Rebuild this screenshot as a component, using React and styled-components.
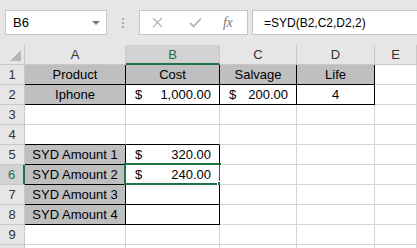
import styled, { createGlobalStyle } from "styled-components";

const GREEN = "#217346";
const GRID = "#d4d4d4";

const Global = createGlobalStyle`
  html, body {
    margin: 0;
    padding: 0;
    background: #ffffff;
  }
  body {
    font-family: "Liberation Sans", Arial, sans-serif;
  }
`;

const Window = styled.div`
  width: 417px;
  height: 248px;
  overflow: hidden;
  background: #ffffff;
`;

const Toolbar = styled.div`
  height: 45px;
  box-sizing: border-box;
  padding: 10px 0 0 5px;
  background: #e6e6e6;
  display: flex;
  align-items: flex-start;
`;

const Box = styled.div`
  height: 25px;
  box-sizing: border-box;
  background: #ffffff;
  border: 1px solid #c6c6c6;
  display: flex;
  align-items: center;
`;

const NameBox = styled(Box)`
  width: 102px;
  padding: 0 6px 0 7px;
  justify-content: space-between;
  font-size: 13px;
  color: #000;
`;

const Caret = styled.span`
  width: 0;
  height: 0;
  border-left: 4px solid transparent;
  border-right: 4px solid transparent;
  border-top: 4px solid #7a7a7a;
`;

const Dots = styled.div`
  width: 32px;
  height: 25px;
  display: flex;
  flex-direction: column;
  align-items: center;
  justify-content: center;
  gap: 2px;

  span {
    width: 2px;
    height: 2px;
    background: #a8a8a8;
  }
`;

const FxGroup = styled(Box)`
  width: 109px;
  padding: 0 0 0 12px;
`;

const IconSlot = styled.span`
  width: ${(p) => p.$w}px;
  display: flex;
  align-items: center;
`;

const Fx = styled.span`
  font-family: "Liberation Serif", "Times New Roman", serif;
  font-style: italic;
  font-size: 14px;
  color: #7a7a7a;
  letter-spacing: -0.5px;
`;

const FormulaBox = styled(Box)`
  flex: 1;
  margin-left: 4px;
  border-right: none;
  padding-left: 11px;
  font-size: 12px;
  color: #000;
`;

const Sheet = styled.div`
  display: grid;
  grid-template-columns: 25px 101px 94px 77px 78px 1fr;
  grid-auto-rows: 20px;
`;

const ColHead = styled.div`
  box-sizing: border-box;
  background: ${(p) => (p.$active ? "#d2d2d2" : "#e6e6e6")};
  border-right: 1px solid #c8c8c8;
  border-bottom: ${(p) => (p.$active ? `2px solid ${GREEN}` : "1px solid #c8c8c8")};
  color: ${(p) => (p.$active ? GREEN : "#333")};
  font-size: 13px;
  display: flex;
  align-items: center;
  justify-content: center;
  position: relative;
`;

const Corner = styled(ColHead)`
  &::after {
    content: "";
    position: absolute;
    right: 3px;
    bottom: 3px;
    width: 0;
    height: 0;
    border-left: 11px solid transparent;
    border-bottom: 11px solid #b6b6b6;
  }
`;

const RowHead = styled.div`
  box-sizing: border-box;
  background: ${(p) => (p.$active ? "#d2d2d2" : "#e6e6e6")};
  border-right: ${(p) => (p.$active ? `2px solid ${GREEN}` : "1px solid #c8c8c8")};
  border-bottom: 1px solid #c8c8c8;
  color: ${(p) => (p.$active ? GREEN : "#333")};
  font-size: 13px;
  display: flex;
  align-items: center;
  justify-content: center;
`;

const Cell = styled.div`
  box-sizing: border-box;
  position: relative;
  background: ${(p) => p.$fill || "#ffffff"};
  border-right: 1px solid ${(p) => (p.$rb ? "#000" : GRID)};
  border-bottom: 1px solid ${(p) => (p.$bb ? "#000" : GRID)};
  font-size: 13px;
  color: #000;
  display: flex;
  align-items: center;
  justify-content: ${(p) => p.$align || "flex-start"};
  padding: ${(p) => (p.$money ? "0 8px 0 9px" : "0 2px")};
  white-space: nowrap;
`;

const Money = styled.span`
  flex: 1;
  display: flex;
  justify-content: space-between;
`;

const Selection = styled.div`
  position: absolute;
  left: -2px;
  top: -2px;
  right: -2px;
  bottom: -1px;
  border: 2px solid ${GREEN};
  pointer-events: none;
`;

const Handle = styled.div`
  position: absolute;
  right: -5px;
  bottom: -5px;
  width: 5px;
  height: 5px;
  background: ${GREEN};
  border: 1px solid #ffffff;
`;

const GRAY = "#bfbfbf";

const cols = ["A", "B", "C", "D", "E"];

// one entry per row, cells A..E
const rows = [
  [
    { v: "Product", fill: GRAY, align: "center", rb: 1, bb: 1 },
    { v: "Cost", fill: GRAY, align: "center", rb: 1, bb: 1 },
    { v: "Salvage", fill: GRAY, align: "center", rb: 1, bb: 1 },
    { v: "Life", fill: GRAY, align: "center", rb: 1, bb: 1 },
    {},
  ],
  [
    { v: "Iphone", fill: GRAY, align: "center", rb: 1, bb: 1 },
    { money: "1,000.00", rb: 1, bb: 1 },
    { money: "200.00", rb: 1, bb: 1 },
    { v: "4", align: "center", rb: 1, bb: 1 },
    {},
  ],
  [{}, {}, {}, {}, {}],
  [{ bb: 1 }, { bb: 1 }, {}, {}, {}],
  [
    { v: "SYD Amount 1", fill: GRAY, align: "center", rb: 1, bb: 1 },
    { money: "320.00", rb: 1, bb: 1 },
    {},
    {},
    {},
  ],
  [
    { v: "SYD Amount 2", fill: GRAY, align: "center", rb: 1, bb: 1 },
    { money: "240.00", rb: 1, bb: 1, selected: true },
    {},
    {},
    {},
  ],
  [
    { v: "SYD Amount 3", fill: GRAY, align: "center", rb: 1, bb: 1 },
    { rb: 1, bb: 1 },
    {},
    {},
    {},
  ],
  [
    { v: "SYD Amount 4", fill: GRAY, align: "center", rb: 1, bb: 1 },
    { rb: 1, bb: 1 },
    {},
    {},
    {},
  ],
  [{}, {}, {}, {}, {}],
];

export default function App() {
  return (
    <Window>
      <Global />
      <Toolbar>
        <NameBox>
          B6
          <Caret />
        </NameBox>
        <Dots>
          <span />
          <span />
          <span />
        </Dots>
        <FxGroup>
          <IconSlot $w={37}>
            <svg width="11" height="11" viewBox="0 0 11 11">
              <path d="M1 1 L10 10 M10 1 L1 10" stroke="#b4b4b4" strokeWidth="1.3" fill="none" />
            </svg>
          </IconSlot>
          <IconSlot $w={34}>
            <svg width="13" height="11" viewBox="0 0 13 11">
              <path d="M1 6 L4.5 9.5 L12 1.5" stroke="#b4b4b4" strokeWidth="1.8" fill="none" />
            </svg>
          </IconSlot>
          <IconSlot $w={20}>
            <Fx>fx</Fx>
          </IconSlot>
        </FxGroup>
        <FormulaBox>=SYD(B2,C2,D2,2)</FormulaBox>
      </Toolbar>
      <Sheet>
        <Corner />
        {cols.map((c) => (
          <ColHead key={c} $active={c === "B"}>
            {c}
          </ColHead>
        ))}
        {rows.map((row, i) => (
          <Row key={i} n={i + 1} cells={row} />
        ))}
        {/* top sliver of row 10, cut by the window edge */}
        <RowHead />
        {cols.map((c) => (
          <Cell key={c} />
        ))}
      </Sheet>
    </Window>
  );
}

function Row({ n, cells }) {
  return (
    <>
      <RowHead $active={n === 6}>{n}</RowHead>
      {cells.map((c, j) => (
        <Cell
          key={j}
          $fill={c.fill}
          $align={c.align}
          $rb={c.rb}
          $bb={c.bb}
          $money={!!c.money}
        >
          {c.money ? (
            <Money>
              <span>$</span>
              <span>{c.money}</span>
            </Money>
          ) : (
            c.v
          )}
          {c.selected && (
            <Selection>
              <Handle />
            </Selection>
          )}
        </Cell>
      ))}
    </>
  );
}
